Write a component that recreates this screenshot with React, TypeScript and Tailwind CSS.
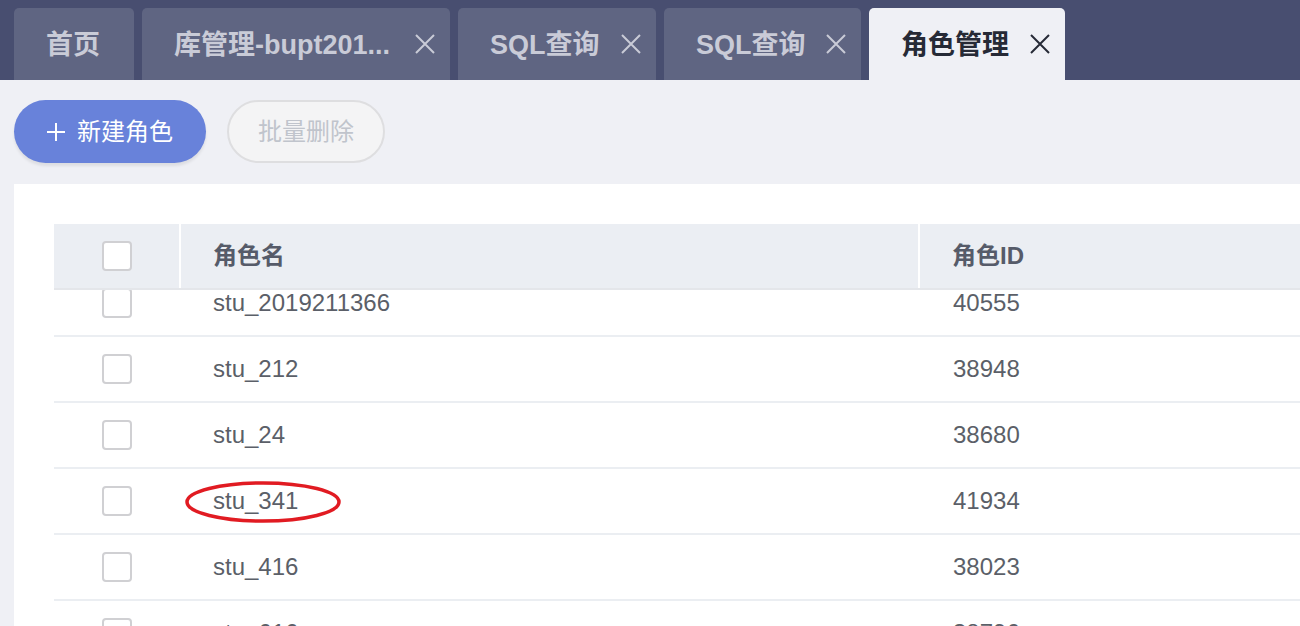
import React from "react";

const tabs = [
  { title: "首页", closable: false, active: false, w: "w-[120px]" },
  { title: "库管理-bupt201...", closable: true, active: false, w: "w-[308px]" },
  { title: "SQL查询", closable: true, active: false, w: "w-[198px]" },
  { title: "SQL查询", closable: true, active: false, w: "w-[197px]" },
  { title: "角色管理", closable: true, active: true, w: "w-[196px]" },
];

const rows = [
  { name: "stu_2019211366", id: "40555" },
  { name: "stu_212", id: "38948" },
  { name: "stu_24", id: "38680" },
  { name: "stu_341", id: "41934", mark: true },
  { name: "stu_416", id: "38023" },
  { name: "stu_616", id: "38796" },
];

function CloseX({ color }: { color: string }) {
  return (
    <svg width="22" height="22" viewBox="0 0 22 22" className="shrink-0">
      <path d="M2 2 L20 20 M20 2 L2 20" stroke={color} strokeWidth="2" strokeLinecap="butt" />
    </svg>
  );
}

function Checkbox() {
  return <div className="w-[30px] h-[30px] rounded-[4px] border-2 border-[#d0d0d3] bg-white" />;
}

export default function App() {
  return (
    <div
      className="w-[1300px] h-[626px] overflow-hidden bg-[#eff0f5] flex flex-col"
      style={{ fontFamily: '"Liberation Sans", "Noto Sans CJK SC", sans-serif' }}
    >
      {/* Tab bar */}
      <div className="h-[80px] shrink-0 bg-[#484e70] flex items-end pl-[14px] gap-[8px]">
        {tabs.map((t, i) => (
          <div
            key={i}
            className={`${t.w} h-[72px] shrink-0 rounded-t-[5px] flex items-center pl-[32px] ${
              t.active ? "bg-[#eff0f5] text-[#262a36]" : "bg-[#5f6582] text-[#c9cbd7]"
            } ${t.closable ? "pr-[14px] justify-between" : "pr-[31px]"}`}
          >
            <span className="text-[27px] font-bold whitespace-nowrap leading-none pt-[2px]">{t.title}</span>
            {t.closable && <CloseX color={t.active ? "#262a36" : "#c9cbd7"} />}
          </div>
        ))}
      </div>

      {/* Toolbar */}
      <div className="h-[104px] shrink-0 flex items-start pt-[20px] pl-[14px] gap-[21px]">
        <button className="w-[192px] h-[63px] rounded-full bg-[#6882da] text-white flex items-center justify-center gap-[12px] shadow-[0_3px_3px_rgba(0,0,0,0.08)]">
          <svg width="18" height="18" viewBox="0 0 18 18">
            <path d="M9 0 V18 M0 9 H18" stroke="white" strokeWidth="2" />
          </svg>
          <span className="text-[24px] leading-none">新建角色</span>
        </button>
        <button className="w-[158px] h-[63px] rounded-full bg-[#f4f4f5] border-2 border-[#dedee0] text-[#c0c4cc] flex items-center justify-center">
          <span className="text-[24px] leading-none">批量删除</span>
        </button>
      </div>

      {/* Card */}
      <div className="flex-1 ml-[14px] bg-white pt-[40px] pl-[40px] overflow-hidden">
        <div className="flex flex-col">
          {/* Header */}
          <div className="flex h-[66px] bg-[#ebeef3] border-b-2 border-[#e4e6ea] text-[#565b69] font-bold text-[24px]">
            <div className="w-[127px] shrink-0 flex items-center justify-center border-r-2 border-white">
              <Checkbox />
            </div>
            <div className="w-[739px] shrink-0 flex items-center pl-[32px] border-r-2 border-white">角色名</div>
            <div className="flex-1 flex items-center pl-[32px]">角色ID</div>
          </div>
          {/* Body */}
          <div className="overflow-hidden h-[400px]">
            <div className="-mt-[19px] flex flex-col">
              {rows.map((r, i) => (
                <div key={i} className="flex h-[66px] border-b-2 border-[#ebeef2] text-[#5b5f68] text-[24px]">
                  <div className="w-[127px] shrink-0 flex items-center justify-center pr-[2px]">
                    <Checkbox />
                  </div>
                  <div className="w-[739px] shrink-0 flex items-center pl-[32px]">
                    <span className="relative">
                      {r.name}
                      {r.mark && (
                        <svg
                          className="absolute left-[-28px] top-[-2px]"
                          width="156"
                          height="42"
                          viewBox="0 0 156 42"
                        >
                          <ellipse cx="78" cy="21" rx="76" ry="19" fill="none" stroke="#e11b22" strokeWidth="3.5" />
                        </svg>
                      )}
                    </span>
                  </div>
                  <div className="flex-1 flex items-center pl-[33px]">{r.id}</div>
                </div>
              ))}
            </div>
          </div>
        </div>
      </div>
    </div>
  );
}
